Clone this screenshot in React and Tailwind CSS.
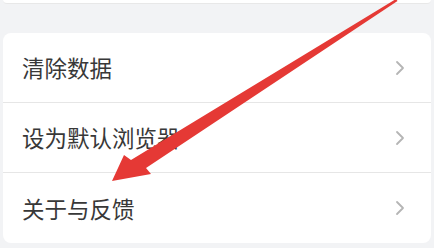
import React from "react";

const Chevron = () => (
  <svg width="10" height="16" viewBox="0 0 10 16" className="shrink-0">
    <path d="M2 2 L8 8 L2 14" fill="none" stroke="#b5b5b5" strokeWidth="1.8" strokeLinecap="round" strokeLinejoin="round" />
  </svg>
);

const Row = ({ label, last }) => (
  <div className={`flex items-center justify-between h-[70px] pl-[19px] pr-[26px] ${last ? "" : "border-b border-[#e6e6e6]"}`}>
    <span className="text-[22.5px] leading-none text-[#383838]">{label}</span>
    <Chevron />
  </div>
);

export default function App() {
  return (
    <div
      className="relative w-[434px] h-[248px] overflow-hidden bg-[#f2f3f5]"
      style={{ fontFamily: '"Noto Sans CJK SC", "Noto Sans", sans-serif' }}
    >
      <div className="mx-[3px] h-[4px] bg-white rounded-b-md border-b border-[#e8e8e8]" />
      <div className="mt-[29px] mx-[3px] bg-white rounded-lg flex flex-col">
        <Row label="清除数据" />
        <Row label="设为默认浏览器" />
        <Row label="关于与反馈" last />
      </div>
      <svg className="absolute inset-0 pointer-events-none" width="434" height="248" viewBox="0 0 434 248">
        <path
          d="M396 -1 L397.5 1 L146 168 L151 174 L112 181 L124 155 L131 160 Z"
          fill="#e53935"
        />
      </svg>
    </div>
  );
}
